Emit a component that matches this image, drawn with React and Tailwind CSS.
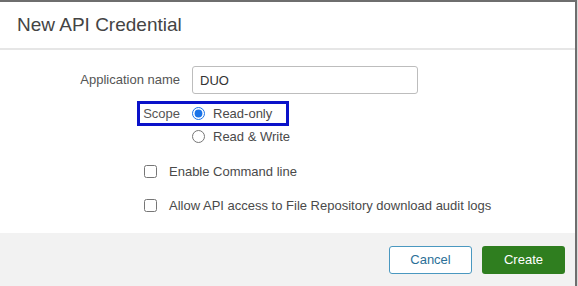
import React, { useState } from 'react';

const App = () => {
  const [appName, setAppName] = useState('DUO');
  const [scope, setScope] = useState('read');
  const [cli, setCli] = useState(false);
  const [audit, setAudit] = useState(false);

  return (
    <div className="flex w-[578px] h-[286px] bg-white font-['Liberation_Sans',Arial,sans-serif]">
      <div className="flex flex-col w-[575px] border-t-2 border-[#6e6e6e]">
        {/* header */}
        <div className="h-[48px] flex items-center px-[17px] pt-[1px] border-b-2 border-[#e6e6e6] text-[19px] text-[#444]">
          New API Credential
        </div>

        {/* body */}
        <div className="flex-1 pt-[16px] text-[13px] text-[#555]">
          <div className="flex items-center">
            <label className="w-[180px] text-right">Application name</label>
            <input
              type="text"
              value={appName}
              onChange={e => setAppName(e.target.value)}
              className="ml-[12px] w-[226px] h-[28px] px-[7px] border border-[#bdbdbd] rounded-[3px] text-[13px] text-[#333] outline-none"
            />
          </div>

          <div className="relative mt-[7px]">
            {/* highlight annotation */}
            <div className="absolute left-[137px] top-[0px] w-[152px] h-[25px] border-[3px] border-[#0a12c9] pointer-events-none" />
            <div className="flex items-center h-[25px]">
              <span className="w-[180px] text-right">Scope</span>
              <label className="ml-[12px] flex items-center gap-[8px] text-[#4a4a4a]">
                <input
                  type="radio"
                  name="scope"
                  checked={scope === 'read'}
                  onChange={() => setScope('read')}
                  className="m-0 w-[13px] h-[13px] accent-[#1a73e8]"
                />
                Read-only
              </label>
            </div>
            <div className="flex items-center h-[21px] pl-[192px]">
              <label className="flex items-center gap-[8px] text-[#4a4a4a]">
                <input
                  type="radio"
                  name="scope"
                  checked={scope === 'rw'}
                  onChange={() => setScope('rw')}
                  className="m-0 w-[13px] h-[13px] accent-[#1a73e8]"
                />
                Read &amp; Write
              </label>
            </div>
          </div>

          <div className="flex flex-col gap-[21px] pl-[144px] mt-[18px] text-[#4a4a4a]">
            <label className="flex items-center gap-[12px] h-[13px]">
              <input
                type="checkbox"
                checked={cli}
                onChange={e => setCli(e.target.checked)}
                className="m-0 w-[13px] h-[13px]"
              />
              Enable Command line
            </label>
            <label className="flex items-center gap-[12px] h-[13px]">
              <input
                type="checkbox"
                checked={audit}
                onChange={e => setAudit(e.target.checked)}
                className="m-0 w-[13px] h-[13px]"
              />
              Allow API access to File Repository download audit logs
            </label>
          </div>
        </div>

        {/* footer */}
        <div className="h-[53px] bg-[#f2f2f2] flex items-start justify-end gap-[10px] pt-[13px] pr-[10px]">
          <button className="w-[83px] h-[28px] bg-white border border-[#4a98c0] rounded-[3px] text-[13px] text-[#2b6f97]">
            Cancel
          </button>
          <button className="w-[83px] h-[28px] bg-[#2f7e1f] rounded-[3px] text-[13px] text-white">
            Create
          </button>
        </div>
      </div>
      <div className="w-[2px] bg-[#6e6e6e]" />
      <div className="w-[1px] bg-[#d9d9d9]" />
    </div>
  );
};

export default App;
